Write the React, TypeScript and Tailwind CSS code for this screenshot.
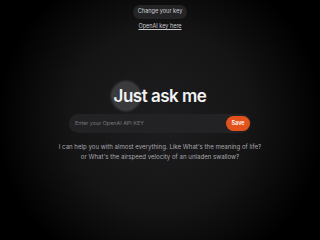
export default function App() {
  return (
    <div
      className="w-[320px] h-[240px] overflow-hidden flex flex-col items-center bg-[radial-gradient(circle_at_50%_50%,#1d1d1f_0%,#151516_45%,#000000_82%)] text-white"
      style={{ fontFamily: "Inter, 'Liberation Sans', sans-serif" }}
    >
      <button className="mt-[5px] h-[14px] px-[5px] rounded-full bg-[#242426] text-[5.6px] leading-none text-[#cfcfd2]">
        Change your key
      </button>
      <a className="mt-[5px] text-[5.5px] leading-none text-[#c8c8cc] underline">
        OpenAI key here
      </a>

      <div className="relative mt-[57px] flex items-center justify-center">
        <div className="absolute left-[-3px] top-[-6px] w-[30px] h-[30px] rounded-full bg-[#3a3a3c] border border-[#505052] blur-[1px]" />
        <h1 className="relative text-[17px] leading-[19px] font-semibold tracking-[-0.5px] text-[#f2f2f2]">
          Just ask me
        </h1>
      </div>

      <div className="mt-[8px] w-[182px] h-[19px] rounded-full bg-[#222224] flex items-center justify-between pl-[6px] pr-[1px]">
        <span className="text-[5.4px] text-[#77777a]">Enter your OpenAI API KEY</span>
        <button className="h-[15px] w-[24px] rounded-full bg-[#e4521b] text-[5.5px] font-semibold text-white">
          Save
        </button>
      </div>

      <p className="mt-[9px] text-[6.1px] leading-[10px] text-center text-[#a8a8ac]">
        I can help you with almost everything. Like What's the meaning of life?
        <br />
        or What's the airspeed velocity of an unladen swallow?
      </p>
    </div>
  );
}
